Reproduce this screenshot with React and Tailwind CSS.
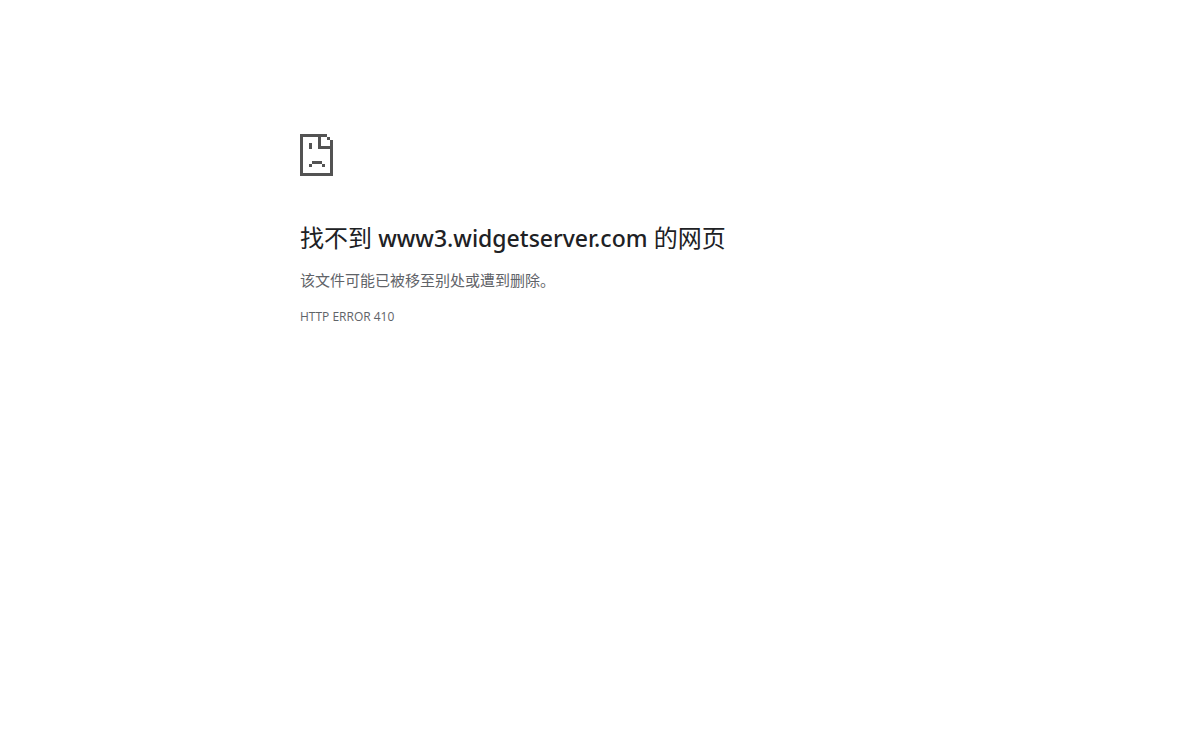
import React from 'react';

const SadPageIcon = () => (
  <svg
    className="h-[42px] w-[33px] text-[#535353]"
    viewBox="0 0 33 42"
    fill="currentColor"
    shapeRendering="crispEdges"
    aria-hidden="true"
  >
    {/* page outline */}
    <path d="M0 0h27v3H3v36h27V6h3v36H0z" />
    {/* folded corner */}
    <path d="M18 3h3v9h9v3H18zM27 3h3v3h-3z" />
    {/* eye and mouth */}
    <path d="M9 9h3v6H9zM12 27h10v3H12zM9 30h3v3H9zM22 30h3v3h-3z" />
  </svg>
);

const App = () => {
  const host = 'www3.widgetserver.com';
  const errorCode = 'HTTP ERROR 410';

  return (
    <div lang="zh-CN" className="min-h-screen bg-white font-['Open_Sans','Noto_Sans_CJK_SC',sans-serif] text-[#5f6368]">
      <main className="mx-auto max-w-[600px] pt-[134px]">
        <SadPageIcon />
        <h1 className="mt-[47px] text-2xl leading-[30px] text-[#202124]">
          找不到 <span className="font-['Noto_Sans',sans-serif] text-[23px] font-medium">{host}</span> 的网页
        </h1>
        <p className="mt-[15px] text-[15px] leading-6">该文件可能已被移至别处或遭到删除。</p>
        <p className="mt-[13px] text-xs leading-6">{errorCode}</p>
      </main>
    </div>
  );
};

export default App;
